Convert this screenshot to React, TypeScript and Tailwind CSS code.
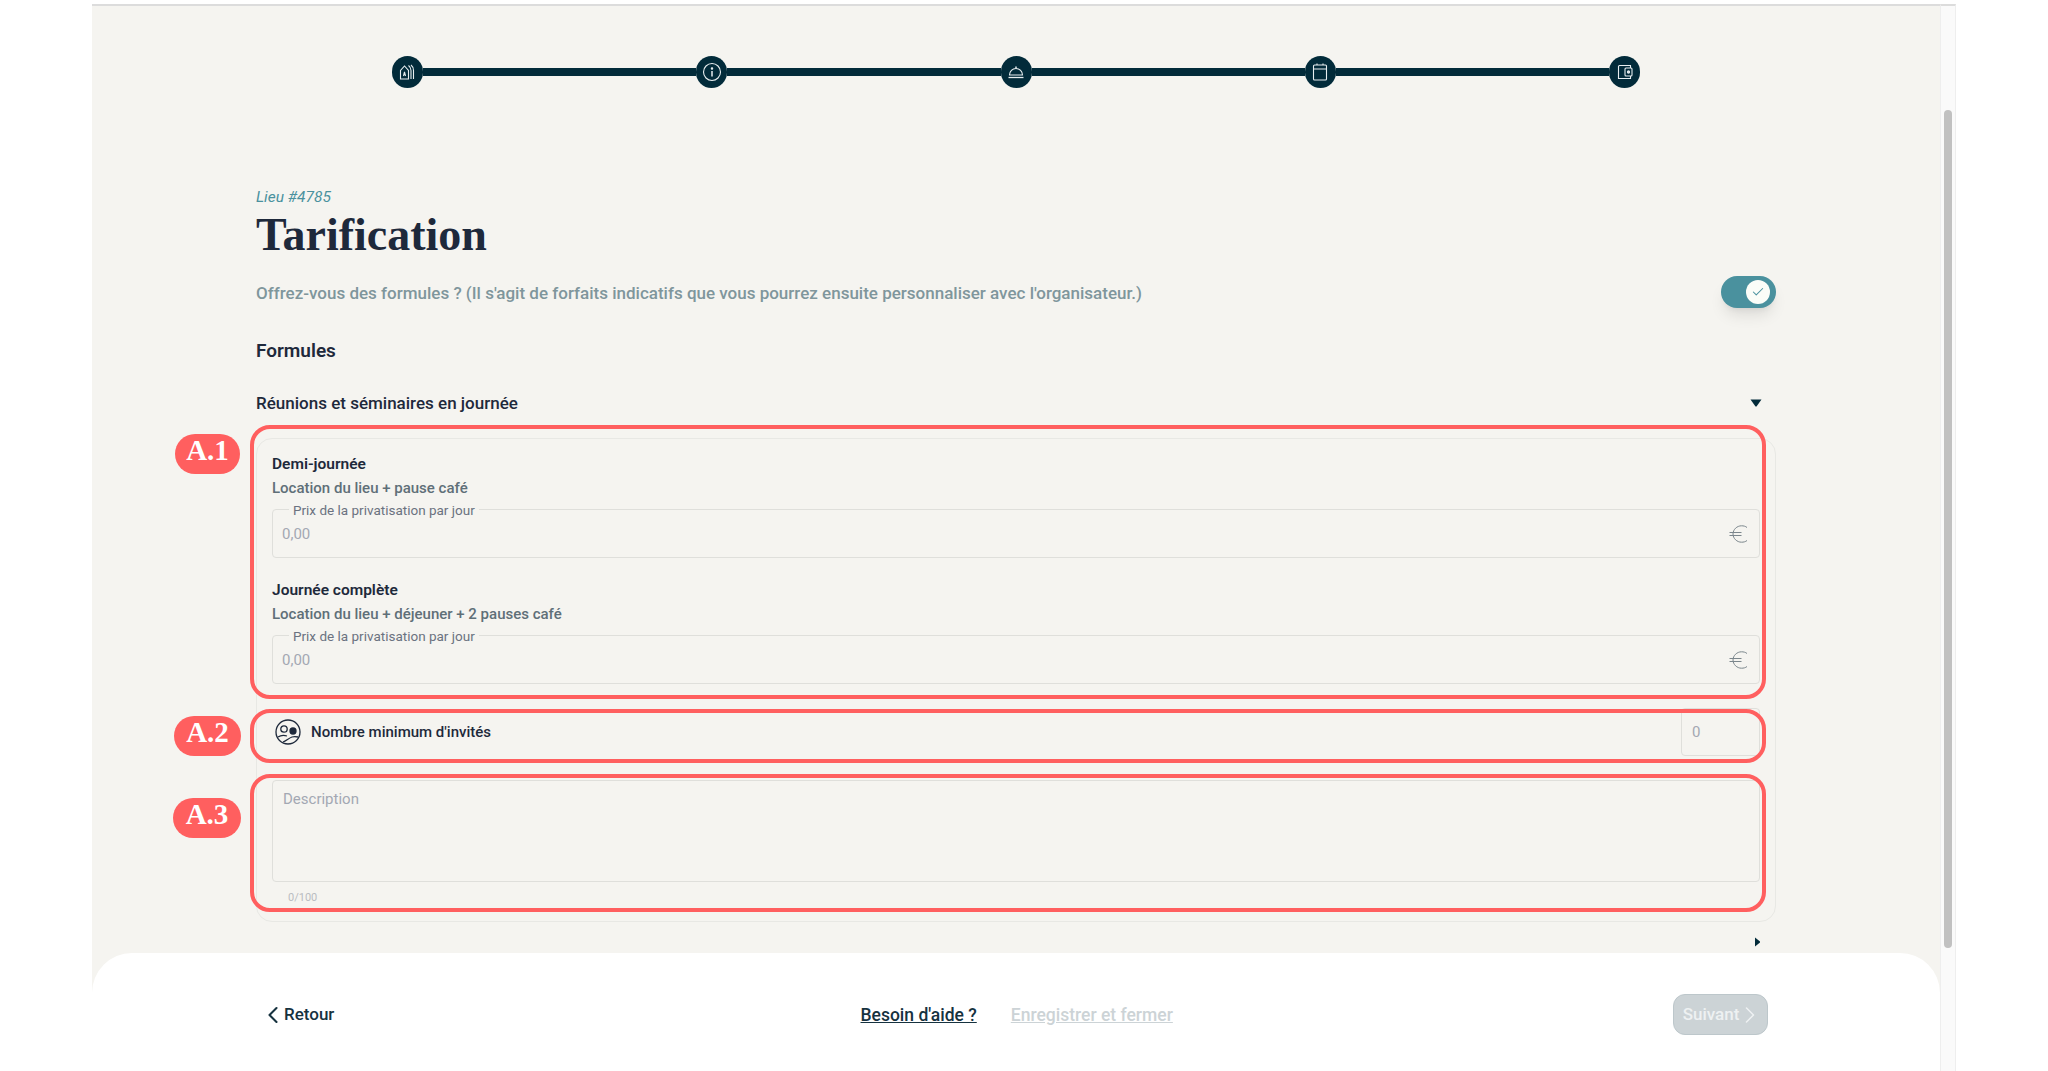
import { ChevronLeft, ChevronRight, Check } from "lucide-react";

const FONT = "font-['Roboto','Liberation_Sans',sans-serif]";

function StepIcon({ children }: { children: React.ReactNode }) {
	return (
		<div className="w-[31px] h-[32px] rounded-full bg-[#022b3a] flex items-center justify-center shrink-0">
			<svg width="20" height="20" viewBox="0 0 20 20" fill="none" stroke="#e8eef0" strokeWidth="1.1">
				{children}
			</svg>
		</div>
	);
}

function Stepper() {
	const line = <div className="flex-1 h-[8px] bg-[#022b3a] border-y border-[#022b3a]" />;
	return (
		<div className="flex items-center mt-[50px] mx-[300px]">
			<StepIcon>
				<path d="M2.500 17V8.500L6.500 4l4 4.500V17z" />
				<path d="M5.500 14l1-4 1 4M5.800 12.500h1.400" />
				<path d="M10.500 3.500c2 1.500 2.500 3 2.500 5V17M13 3c2 1.500 2.500 3 2.500 5.500V17" />
			</StepIcon>
			{line}
			<StepIcon>
				<circle cx="10" cy="10" r="8.500" />
				<path d="M10 9v5.500" strokeWidth="1.500" />
				<circle cx="10" cy="6.500" r="0.700" fill="#e8eef0" />
			</StepIcon>
			{line}
			<StepIcon>
				<path d="M3.500 13a6.500 6.500 0 0 1 13 0z" />
				<path d="M10 4.500V6" strokeWidth="1.500" />
				<path d="M2.500 15.500h15" strokeWidth="1.300" />
			</StepIcon>
			{line}
			<StepIcon>
				<rect x="3.500" y="3" width="13" height="15" rx="1" />
				<path d="M3.500 7h13M7 1.500V3M13 1.500V3" />
			</StepIcon>
			{line}
			<StepIcon>
				<path d="M15.500 6V3.500h-11a1 1 0 0 0-1 1v12h12V14" />
				<rect x="10" y="6" width="7" height="8" rx="1" />
				<circle cx="13.500" cy="10" r="1.100" fill="#e8eef0" />
			</StepIcon>
		</div>
	);
}

function EuroSign() {
	return (
		<svg width="19" height="18" viewBox="0 0 19 18" fill="none" stroke="#7b868c" strokeWidth="1">
			<path d="M18 2.500C16.500 1.200 14.500.8 12.500.8 8 .8 4 4.500 4 9s4 8.200 8.500 8.200c2 0 4-.4 5.500-1.700" />
			<path d="M.5 7.500h12M.5 10.500h12" />
		</svg>
	);
}

function PriceField() {
	return (
		<div className="relative mt-[11px] h-[49px] border border-[#dfdfdb] rounded-[4px] flex items-center justify-between pl-[9px] pr-[11px]">
			<span className="absolute left-[16px] -top-[7px] px-[4px] bg-[#f5f4f0] text-[13.500px] leading-[14px] text-[#6b7280]">
				Prix de la privatisation par jour
			</span>
			<span className="pt-[2px] text-[15px] text-[#a3a8b3]">0,00</span>
			<EuroSign />
		</div>
	);
}

function Formula({ title, sub }: { title: string; sub: string }) {
	return (
		<div>
			<div className="text-[15.500px] leading-[20px] font-semibold text-[#1e293b]">{title}</div>
			<div className="mt-[4px] text-[15px] leading-[20px] font-medium text-[#5f6f78]">{sub}</div>
			<PriceField />
		</div>
	);
}

function Zone({ className }: { className: string }) {
	return <div className={`absolute left-[-6px] w-[1516px] border-[4px] border-[#ff5f5f] rounded-[20px] ${className}`} />;
}

function Badge({ label, className }: { label: string; className: string }) {
	return (
		<div
			className={`absolute h-[40px] rounded-full bg-[#ff5f5f] text-white flex items-center justify-center pb-[7px] font-['Liberation_Serif',serif] font-bold text-[29px] ${className}`}
		>
			{label}
		</div>
	);
}

function GuestsIcon() {
	return (
		<svg width="26" height="26" viewBox="0 0 26 26" fill="none" stroke="#1e293b" strokeWidth="1.300" className="shrink-0">
			<circle cx="13" cy="13" r="12" />
			<circle cx="9" cy="10" r="3.200" />
			<circle cx="18" cy="12" r="3" fill="#1e293b" />
			<path d="M3 18c3-2 6-2 9-1M8 23c3-1 6-4 9-5 2-.7 4-.5 6 0" />
		</svg>
	);
}

export default function App() {
	return (
		<div className={`h-[1071px] overflow-hidden bg-white flex pl-[92px] pt-[4px] ${FONT}`}>
			<div className="w-[1848px] h-full bg-[#f5f4f0] border-t-2 border-[#dcdcdc] flex flex-col">
				<Stepper />

				<div className="px-[164px] flex-1">
					<div className="mt-[99px] text-[15.500px] leading-[20px] italic text-[#4a919e]">Lieu #4785</div>
					<h1 className="mt-[4px] text-[46px] leading-[48px] font-bold text-[#1e293b] font-['Liberation_Serif',serif]">
						Tarification
					</h1>
					<div className="mt-[17px] h-[32px] flex items-center justify-between">
						<p className="pt-[4px] text-[17px] font-medium text-[#7f969c]">
							Offrez-vous des formules ? (Il s'agit de forfaits indicatifs que vous pourrez ensuite personnaliser avec
							l'organisateur.)
						</p>
						<div className="w-[55px] h-[32px] rounded-full bg-[#4a919e] shadow-lg flex items-center justify-end pr-[6px]">
							<div className="w-[24px] h-[24px] rounded-full bg-[#fbfdf8] flex items-center justify-center">
								<Check size={14} strokeWidth={1.800} className="text-[#4a919e]" />
							</div>
						</div>
					</div>

					<h2 className="mt-[31px] text-[19px] leading-[24px] font-semibold text-[#1e293b]">Formules</h2>

					<div className="mt-[28px] h-[24px] flex items-center justify-between pr-[14px]">
						<span className="pt-[1px] text-[17px] font-medium text-[#1e293b]">Réunions et séminaires en journée</span>
						<svg width="12" height="8" viewBox="0 0 12 8" fill="#022b3a">
							<path d="M0.500 0.500h11L6.500 7.500h-1z" />
						</svg>
					</div>

					<div className="relative mt-[23px]">
						<div className="h-[484px] border border-[#e8e8e4] rounded-[16px] px-[15px] pt-[15px]">
							<div className="flex flex-col gap-[22px]">
								<Formula title="Demi-journée" sub="Location du lieu + pause café" />
								<Formula title="Journée complète" sub="Location du lieu + déjeuner + 2 pauses café" />
							</div>
							<div className="mt-[24px] h-[48px] flex items-center justify-between">
								<div className="flex items-center gap-[10px] pl-[3px] -mt-[1px]">
									<GuestsIcon />
									<span className="pt-[1px] text-[15px] font-medium text-[#1e293b]">Nombre minimum d'invités</span>
								</div>
								<div className="w-[79px] h-full border border-[#dfdfdb] rounded-[4px] flex items-center pl-[10px] text-[15px] text-[#a3a8b3]">
									0
								</div>
							</div>
							<div className="mt-[24px] h-[102px] border border-[#dfdfdb] rounded-[4px] pl-[10px] pt-[7px] text-[15px] text-[#a3a8b3]">
								Description
							</div>
							<div className="mt-[10px] pl-[16px] text-[11px] leading-[12px] text-[#b9bcc1]">0/100</div>
						</div>
						<Zone className="top-[-13px] h-[274px]" />
						<Zone className="top-[271px] h-[54px]" />
						<Zone className="top-[336px] h-[138px]" />
						<Badge label="A.1" className="left-[-81px] top-[-4px] w-[65px]" />
						<Badge label="A.2" className="left-[-82px] top-[278px] w-[67px]" />
						<Badge label="A.3" className="left-[-83px] top-[360px] w-[68px]" />
					</div>

					<div className="mt-[15px] flex justify-end pr-[15px]">
						<svg width="7" height="10" viewBox="0 0 7 10" fill="#022b3a">
							<path d="M1 0.500l5 4v1l-5 4z" />
						</svg>
					</div>
				</div>

				<div className="h-[118px] shrink-0 bg-white rounded-t-[40px] pl-[172px] pr-[172px] pt-[5px] flex items-center justify-between">
					<div className="flex items-center text-[17px] font-medium text-[#16323f]">
						<ChevronLeft size={28} strokeWidth={1.800} className="-ml-[5px] -mr-[3px]" />
						Retour
					</div>
					<div className="flex items-center gap-[34px] ml-[26px] pt-[2px] text-[17.500px] font-medium">
						<a className="underline text-[#16323f]">Besoin d'aide ?</a>
						<a className="underline text-[#ccd3d6]">Enregistrer et fermer</a>
					</div>
					<div className="w-[95px] h-[41px] rounded-[12px] bg-[#ccd3d6] border border-[#bdc7cb] flex items-center justify-center text-[17px] font-medium text-[#eef1f2]">
						Suivant
						<ChevronRight size={28} strokeWidth={1.300} className="-mr-[6px] -ml-[3px]" />
					</div>
				</div>
			</div>

			<div className="w-[16px] h-full bg-[#fafafa] border-x border-t-2 border-[#eeeeee] border-t-[#dcdcdc] px-[3px]">
				<div className="mt-[104px] h-[838px] rounded-full bg-[#c1c1c1]" />
			</div>
		</div>
	);
}
